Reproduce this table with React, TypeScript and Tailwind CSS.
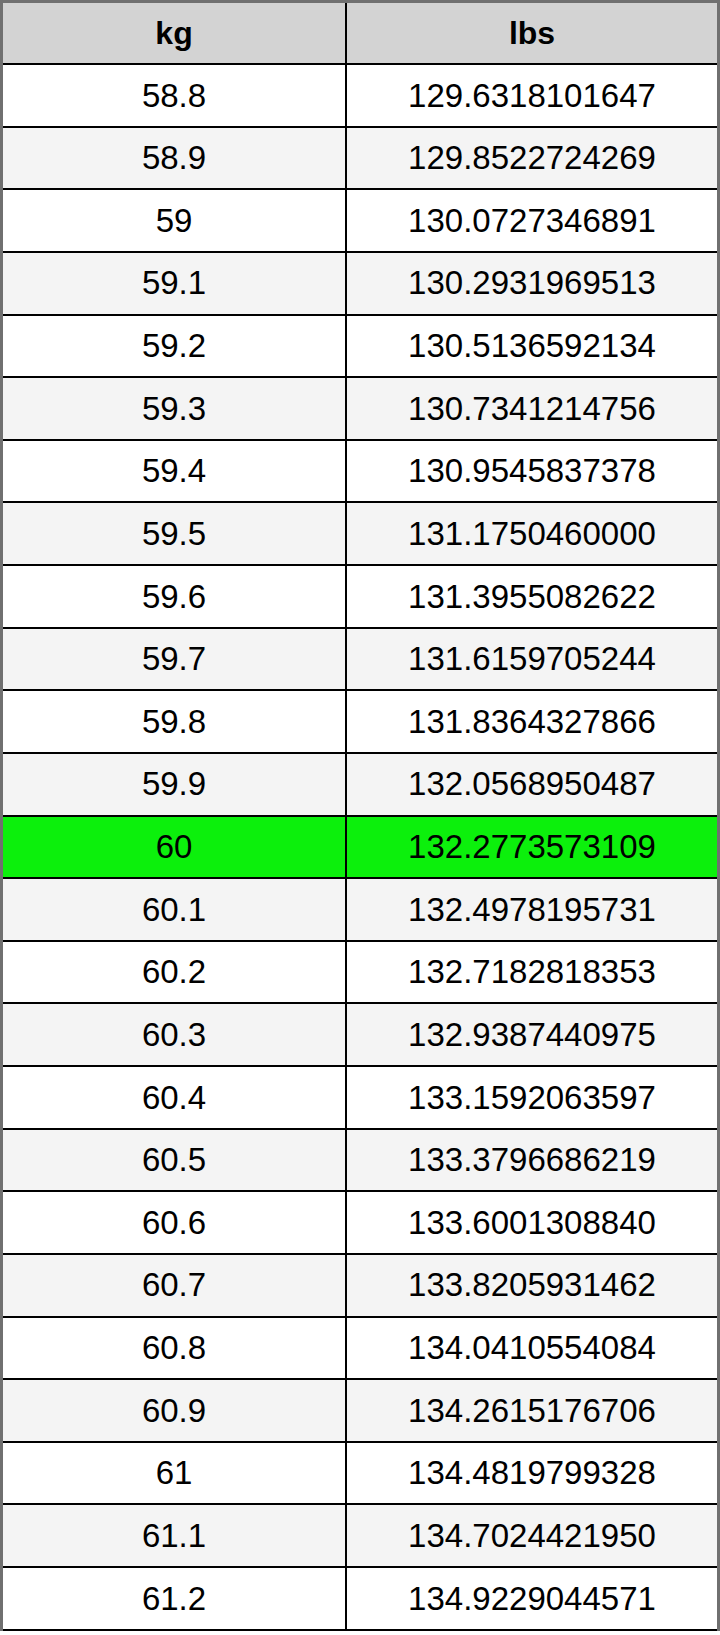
const rows: [string, string][] = [
  ["58.8", "129.6318101647"],
  ["58.9", "129.8522724269"],
  ["59", "130.0727346891"],
  ["59.1", "130.2931969513"],
  ["59.2", "130.5136592134"],
  ["59.3", "130.7341214756"],
  ["59.4", "130.9545837378"],
  ["59.5", "131.1750460000"],
  ["59.6", "131.3955082622"],
  ["59.7", "131.6159705244"],
  ["59.8", "131.8364327866"],
  ["59.9", "132.0568950487"],
  ["60", "132.2773573109"],
  ["60.1", "132.4978195731"],
  ["60.2", "132.7182818353"],
  ["60.3", "132.9387440975"],
  ["60.4", "133.1592063597"],
  ["60.5", "133.3796686219"],
  ["60.6", "133.6001308840"],
  ["60.7", "133.8205931462"],
  ["60.8", "134.0410554084"],
  ["60.9", "134.2615176706"],
  ["61", "134.4819799328"],
  ["61.1", "134.7024421950"],
  ["61.2", "134.9229044571"],
];

export default function App() {
  return (
    <div className="min-h-[1635px] w-[720px] bg-white font-['Liberation_Sans',Arial,sans-serif] text-black">
      <div className="border-x-[3px] border-t-[3px] border-[#707070]">
        <div className="grid h-[62px] grid-cols-[344px_1fr] border-b-2 border-black bg-[#d3d3d3] text-[32px] font-bold">
          <div className="flex items-center justify-center border-r-2 border-black">kg</div>
          <div className="flex items-center justify-center">lbs</div>
        </div>
        {rows.map(([kg, lbs], i) => {
          const bg = kg === "60" ? "bg-[#0cf00c]" : i % 2 === 1 ? "bg-[#f4f4f4]" : "bg-white";
          return (
            <div
              key={kg}
              className={`grid h-[62.64px] grid-cols-[344px_1fr] border-b-2 border-black text-[33px] ${bg}`}
            >
              <div className="flex items-center justify-center border-r-2 border-black">{kg}</div>
              <div className="flex items-center justify-center">{lbs}</div>
            </div>
          );
        })}
      </div>
    </div>
  );
}
